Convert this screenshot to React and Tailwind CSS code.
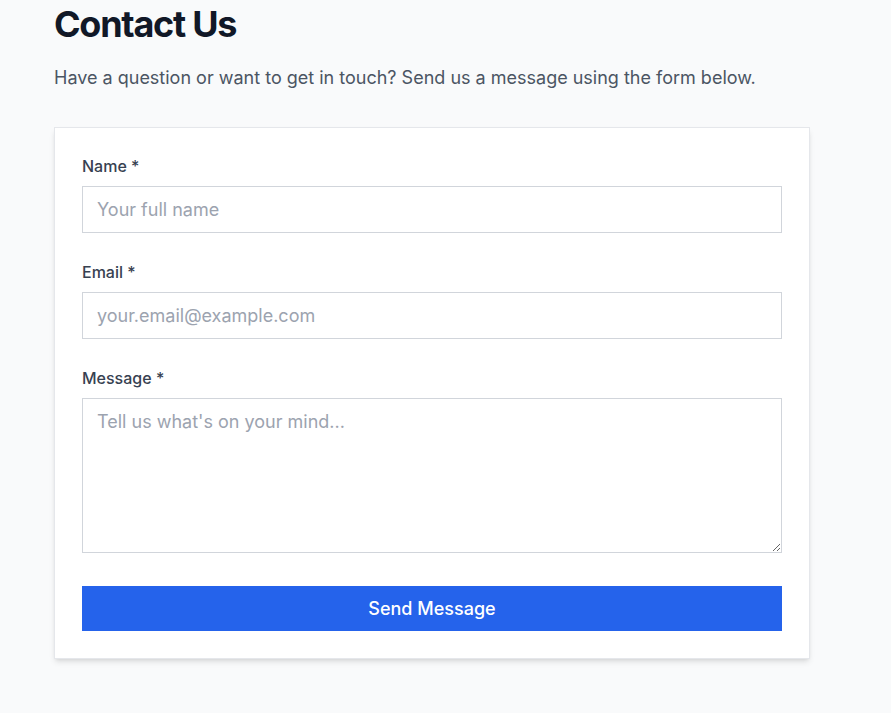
import React from 'react';

const Field = ({ label, children }) => (
  <div>
    <label className="block text-base leading-[22px] font-medium text-[#374151] mb-[9px]">
      {label} *
    </label>
    {children}
  </div>
);

const inputClass =
  'block w-full border border-[#d1d5db] bg-white px-3.5 py-[9px] text-lg leading-[27px] text-[#111827] placeholder:text-[#9ca3af] outline-none';

const App = () => {
  return (
    <div className="min-h-screen bg-[#f9fafb] font-['Inter',sans-serif]">
      <div className="pl-[54px] pt-1 pb-14">
        {/* Header */}
        <h1 className="text-4xl leading-10 font-bold tracking-[-0.035em] text-[#111827] mb-5">
          Contact Us
        </h1>
        <p className="text-lg leading-7 text-[#4b5563] mb-[35px]">
          Have a question or want to get in touch? Send us a message using the form below.
        </p>

        {/* Form card */}
        <form
          className="w-[756px] bg-white border border-[#e5e7eb] shadow-md p-[27px]"
          onSubmit={(e) => e.preventDefault()}
        >
          <div className="flex flex-col gap-7">
            <Field label="Name">
              <input type="text" placeholder="Your full name" className={`${inputClass} h-[47px]`} />
            </Field>
            <Field label="Email">
              <input
                type="email"
                placeholder="your.email@example.com"
                className={`${inputClass} h-[47px]`}
              />
            </Field>
            <Field label="Message">
              <textarea
                placeholder="Tell us what's on your mind..."
                className={`${inputClass} h-[155px]`}
              />
            </Field>
          </div>

          <button
            type="submit"
            className="mt-[33px] w-full h-[45px] bg-[#2563eb] text-white text-lg font-medium"
          >
            Send Message
          </button>
        </form>
      </div>
    </div>
  );
};

export default App;
